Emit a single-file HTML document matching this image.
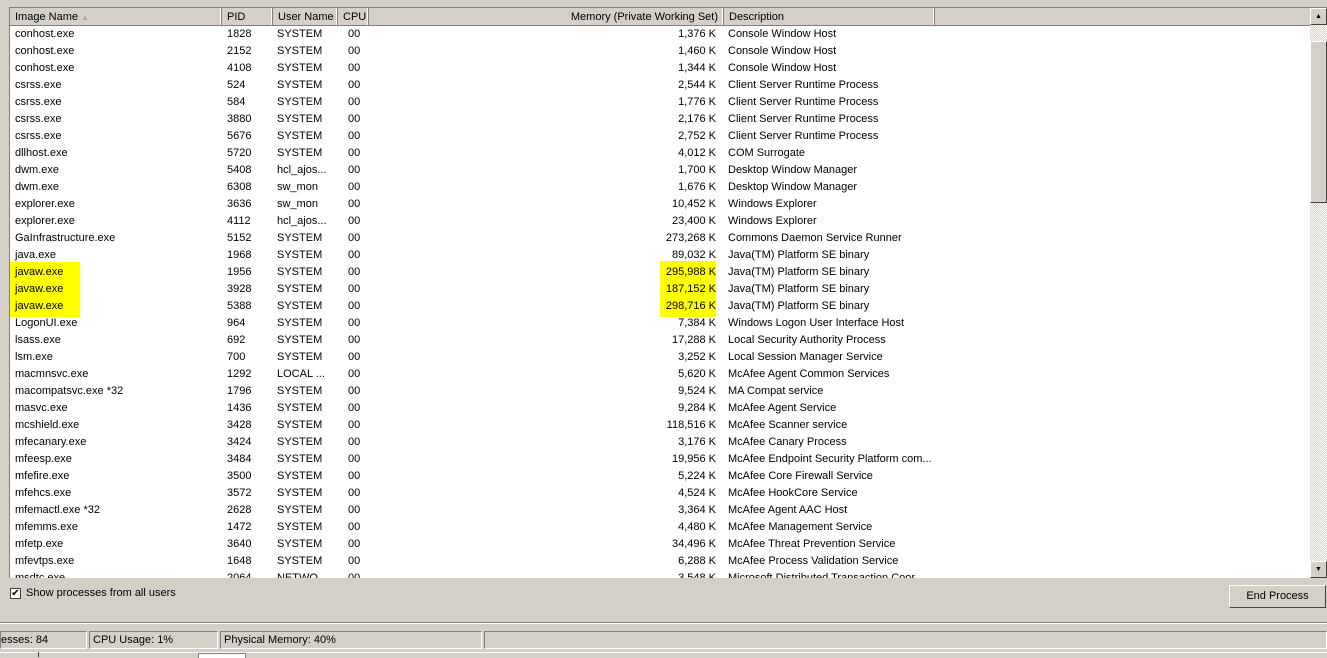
<!DOCTYPE html><html><head><style>
body{margin:0;width:1327px;height:657px;background:#d4d0c8;font-family:"Liberation Sans",sans-serif;font-size:11px;position:relative;overflow:hidden;color:#000}
.list{position:absolute;left:9px;top:7px;width:1317px;height:570px;background:#fff;border-left:1px solid #808080;border-top:1px solid #808080;overflow:hidden}
.hdr{position:absolute;top:0;left:0;height:17px;width:1300px;background:#d4d0c8;border-bottom:1px solid #808080}
.h{position:absolute;top:0;height:17px;line-height:18px;border-right:1px solid #808080;box-shadow:inset -1px 0 #fff;padding-left:5px;box-sizing:border-box}
.r{position:absolute;left:0;height:17px;line-height:17px;width:1300px}
.r span{position:absolute;white-space:nowrap}
.hl{background:#ffff00}
.sb{position:absolute;left:1300px;top:0;width:17px;height:570px;background:repeating-conic-gradient(#d4d0c8 0 25%,#fff 0 50%) 0 0/2px 2px}
.btn{position:absolute;background:#d4d0c8;border:1px solid;border-color:#fff #404040 #404040 #fff;box-sizing:border-box}
</style></head><body>
<div class="list">
<div class="hdr">
<div class="h" style="left:0;width:212px">Image Name <span style="color:#aaa;font-size:8px">&#9650;</span></div>
<div class="h" style="left:212px;width:51px">PID</div>
<div class="h" style="left:263px;width:65px">User Name</div>
<div class="h" style="left:328px;width:31px">CPU</div>
<div class="h" style="left:359px;width:355px;text-align:right;padding-right:5px">Memory (Private Working Set)</div>
<div class="h" style="left:714px;width:211px">Description</div>
</div>
<div id="rows"></div>
<div class="sb">
<div class="btn" style="left:0;top:0;width:17px;height:17px;font-size:7px;text-align:center;line-height:15px">&#9650;</div>
<div class="btn" style="left:0;top:33px;width:17px;height:162px"></div>
<div class="btn" style="left:0;top:553px;width:17px;height:17px;font-size:7px;text-align:center;line-height:15px">&#9660;</div>
</div>
</div>
<div style="position:absolute;left:10px;top:588px;width:11px;height:11px;background:#fff;border:1px solid #404040;box-sizing:border-box;font-size:10px;line-height:9px;text-align:center">&#10004;</div>
<div style="position:absolute;left:26px;top:587px">Show processes from all users</div>
<div class="btn" style="left:1229px;top:585px;width:97px;height:23px;text-align:center;line-height:21px">End Process</div>
<div style="position:absolute;left:0;top:622px;width:1327px;height:1px;background:#808080"></div>
<div style="position:absolute;left:0;top:623px;width:1327px;height:1px;background:#fff"></div>
<div style="position:absolute;left:0;top:630px;width:1327px;height:20px">
<div style="position:absolute;left:0;top:1px;width:87px;height:18px;border:1px solid;border-color:#808080 #fff #fff #808080;box-sizing:border-box;line-height:17px;overflow:hidden;direction:rtl;text-align:left"><span style="direction:ltr;unicode-bidi:embed">esses: 84</span></div>
<div style="position:absolute;left:89px;top:1px;width:129px;height:18px;border:1px solid;border-color:#808080 #fff #fff #808080;box-sizing:border-box;line-height:17px;padding-left:3px">CPU Usage: 1%</div>
<div style="position:absolute;left:220px;top:1px;width:262px;height:18px;border:1px solid;border-color:#808080 #fff #fff #808080;box-sizing:border-box;line-height:17px;padding-left:3px">Physical Memory: 40%</div>
<div style="position:absolute;left:484px;top:1px;width:843px;height:18px;border:1px solid;border-color:#808080 #fff #fff #808080;box-sizing:border-box"></div>
</div>
<div style="position:absolute;left:0;top:652px;width:1327px;height:5px;background:#d4d0c8;border-top:1px solid #fff"></div>
<div style="position:absolute;left:38px;top:652px;width:1px;height:5px;background:#404040"></div>
<div style="position:absolute;left:198px;top:653px;width:46px;height:4px;border:1px solid #808080;border-bottom:none;background:#fff"></div>
<script>
var d=[["conhost.exe",1828,"SYSTEM","1,376 K","Console Window Host"],["conhost.exe",2152,"SYSTEM","1,460 K","Console Window Host"],["conhost.exe",4108,"SYSTEM","1,344 K","Console Window Host"],["csrss.exe",524,"SYSTEM","2,544 K","Client Server Runtime Process"],["csrss.exe",584,"SYSTEM","1,776 K","Client Server Runtime Process"],["csrss.exe",3880,"SYSTEM","2,176 K","Client Server Runtime Process"],["csrss.exe",5676,"SYSTEM","2,752 K","Client Server Runtime Process"],["dllhost.exe",5720,"SYSTEM","4,012 K","COM Surrogate"],["dwm.exe",5408,"hcl_ajos...","1,700 K","Desktop Window Manager"],["dwm.exe",6308,"sw_mon","1,676 K","Desktop Window Manager"],["explorer.exe",3636,"sw_mon","10,452 K","Windows Explorer"],["explorer.exe",4112,"hcl_ajos...","23,400 K","Windows Explorer"],["GaInfrastructure.exe",5152,"SYSTEM","273,268 K","Commons Daemon Service Runner"],["java.exe",1968,"SYSTEM","89,032 K","Java(TM) Platform SE binary"],["javaw.exe",1956,"SYSTEM","295,988 K","Java(TM) Platform SE binary",1],["javaw.exe",3928,"SYSTEM","187,152 K","Java(TM) Platform SE binary",1],["javaw.exe",5388,"SYSTEM","298,716 K","Java(TM) Platform SE binary",1],["LogonUI.exe",964,"SYSTEM","7,384 K","Windows Logon User Interface Host"],["lsass.exe",692,"SYSTEM","17,288 K","Local Security Authority Process"],["lsm.exe",700,"SYSTEM","3,252 K","Local Session Manager Service"],["macmnsvc.exe",1292,"LOCAL ...","5,620 K","McAfee Agent Common Services"],["macompatsvc.exe *32",1796,"SYSTEM","9,524 K","MA Compat service"],["masvc.exe",1436,"SYSTEM","9,284 K","McAfee Agent Service"],["mcshield.exe",3428,"SYSTEM","118,516 K","McAfee Scanner service"],["mfecanary.exe",3424,"SYSTEM","3,176 K","McAfee Canary Process"],["mfeesp.exe",3484,"SYSTEM","19,956 K","McAfee Endpoint Security Platform com..."],["mfefire.exe",3500,"SYSTEM","5,224 K","McAfee Core Firewall Service"],["mfehcs.exe",3572,"SYSTEM","4,524 K","McAfee HookCore Service"],["mfemactl.exe *32",2628,"SYSTEM","3,364 K","McAfee Agent AAC Host"],["mfemms.exe",1472,"SYSTEM","4,480 K","McAfee Management Service"],["mfetp.exe",3640,"SYSTEM","34,496 K","McAfee Threat Prevention Service"],["mfevtps.exe",1648,"SYSTEM","6,288 K","McAfee Process Validation Service"],["msdtc.exe",2064,"NETWO...","3,548 K","Microsoft Distributed Transaction Coor..."]];
var h="";d.forEach(function(r,i){var t=18+i*17;var hl=r[5];
h+='<div class="r" style="top:'+t+'px">'+
(hl?'<span class="hl" style="left:0;top:-2px;height:21px;width:70px"></span><span class="hl" style="left:650px;top:-3px;height:22px;width:56px"></span>':'')+
'<span style="left:5px">'+r[0]+'</span><span style="left:217px">'+r[1]+'</span><span style="left:267px">'+r[2]+'</span><span style="left:338px">00</span><span style="right:594px">'+r[3]+'</span><span style="left:718px">'+r[4]+'</span></div>';});
document.getElementById("rows").innerHTML=h;
</script>
</body></html>
